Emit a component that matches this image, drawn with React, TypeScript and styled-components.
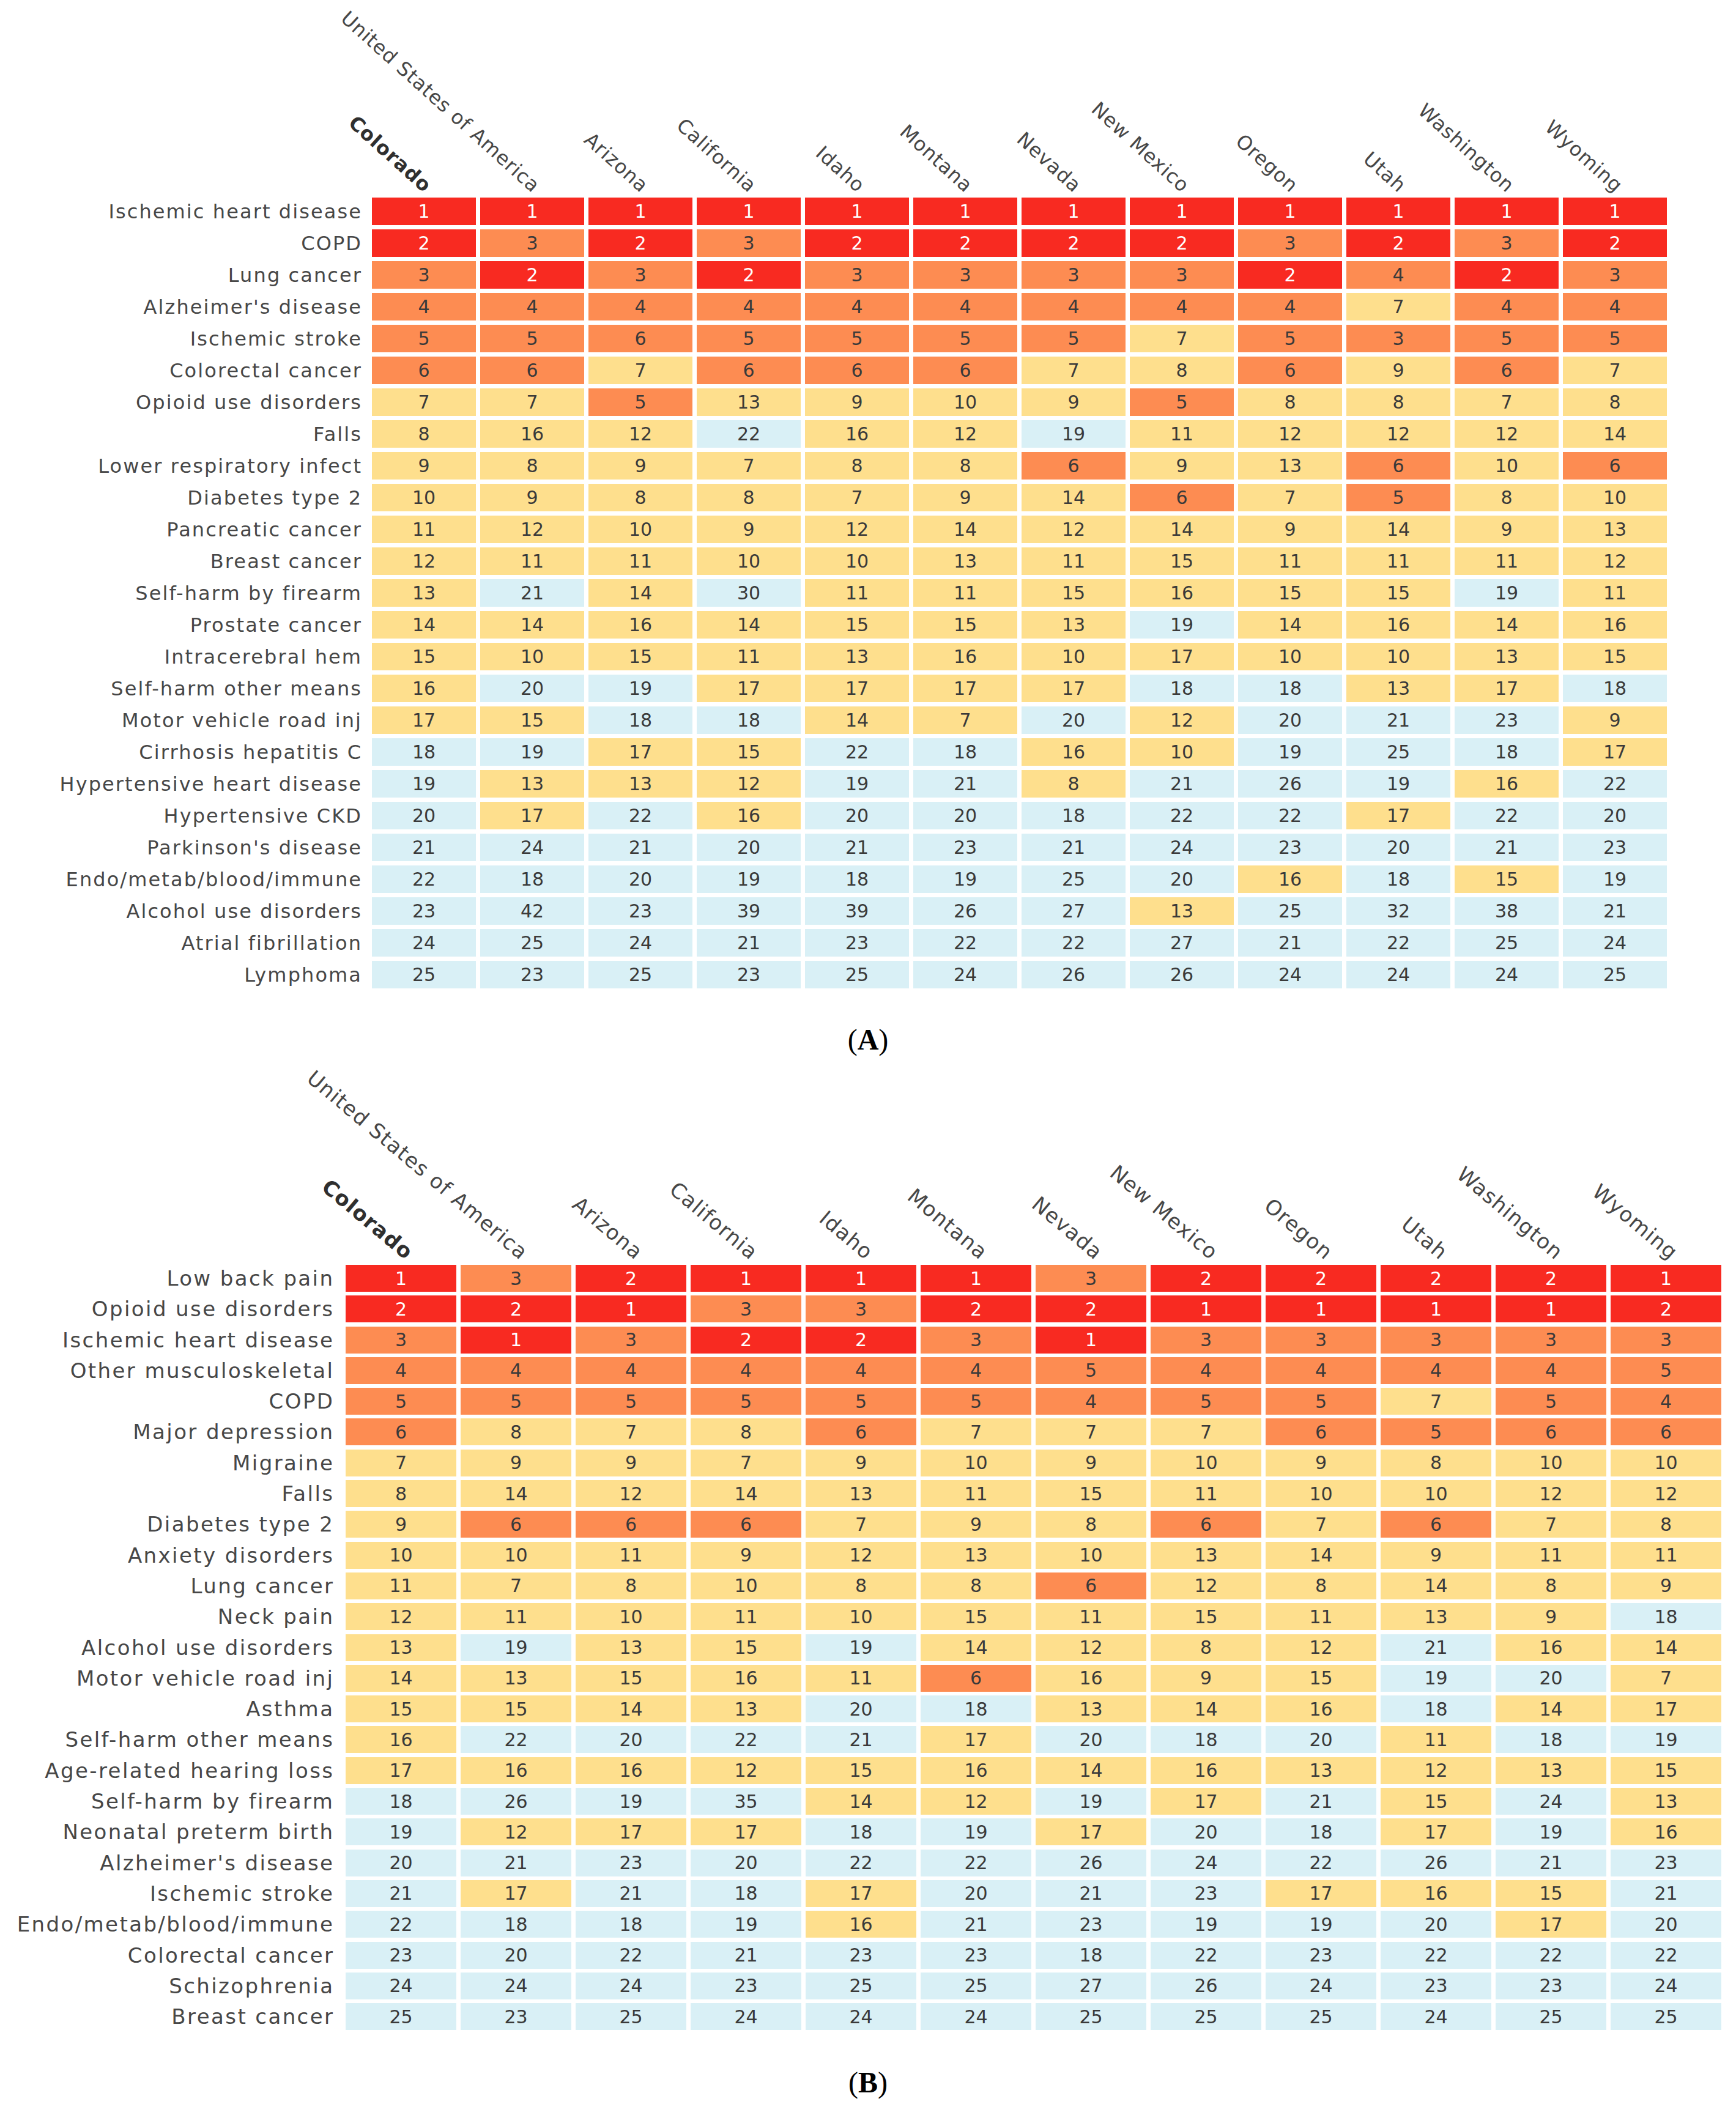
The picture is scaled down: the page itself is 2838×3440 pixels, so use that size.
import React from 'react';
import styled, {createGlobalStyle} from 'styled-components';

type Tier = 'red' | 'orange' | 'yellow' | 'blue';

interface PanelSpec {
    caption: string;
    headerHeight: number;
    labelWidth: number;
    labelPad: number;
    labelSize: number;
    colWidth: number;
    rowHeight: number;
    rowGap: number;
    angle: number;
    letterSpacing: number;
    headSpacing: number;
    headShift: number;
    captionGap: number;
    rows: [string, number[]][];
}

const COLUMNS = [
    'Colorado', 'United States of America', 'Arizona', 'California', 'Idaho', 'Montana',
    'Nevada', 'New Mexico', 'Oregon', 'Utah', 'Washington', 'Wyoming',
];

const PANELS: PanelSpec[] = [
    {
        caption: 'A',
        headerHeight: 323,
        labelWidth: 601,
        labelPad: 11,
        labelSize: 32,
        colWidth: 170,
        rowHeight: 45,
        rowGap: 7,
        angle: 42,
        letterSpacing: 2.1,
        headSpacing: 1,
        headShift: -3,
        captionGap: 60,
        rows: [
            ['Ischemic heart disease', [1, 1, 1, 1, 1, 1, 1, 1, 1, 1, 1, 1]],
            ['COPD', [2, 3, 2, 3, 2, 2, 2, 2, 3, 2, 3, 2]],
            ['Lung cancer', [3, 2, 3, 2, 3, 3, 3, 3, 2, 4, 2, 3]],
            ["Alzheimer's disease", [4, 4, 4, 4, 4, 4, 4, 4, 4, 7, 4, 4]],
            ['Ischemic stroke', [5, 5, 6, 5, 5, 5, 5, 7, 5, 3, 5, 5]],
            ['Colorectal cancer', [6, 6, 7, 6, 6, 6, 7, 8, 6, 9, 6, 7]],
            ['Opioid use disorders', [7, 7, 5, 13, 9, 10, 9, 5, 8, 8, 7, 8]],
            ['Falls', [8, 16, 12, 22, 16, 12, 19, 11, 12, 12, 12, 14]],
            ['Lower respiratory infect', [9, 8, 9, 7, 8, 8, 6, 9, 13, 6, 10, 6]],
            ['Diabetes type 2', [10, 9, 8, 8, 7, 9, 14, 6, 7, 5, 8, 10]],
            ['Pancreatic cancer', [11, 12, 10, 9, 12, 14, 12, 14, 9, 14, 9, 13]],
            ['Breast cancer', [12, 11, 11, 10, 10, 13, 11, 15, 11, 11, 11, 12]],
            ['Self-harm by firearm', [13, 21, 14, 30, 11, 11, 15, 16, 15, 15, 19, 11]],
            ['Prostate cancer', [14, 14, 16, 14, 15, 15, 13, 19, 14, 16, 14, 16]],
            ['Intracerebral hem', [15, 10, 15, 11, 13, 16, 10, 17, 10, 10, 13, 15]],
            ['Self-harm other means', [16, 20, 19, 17, 17, 17, 17, 18, 18, 13, 17, 18]],
            ['Motor vehicle road inj', [17, 15, 18, 18, 14, 7, 20, 12, 20, 21, 23, 9]],
            ['Cirrhosis hepatitis C', [18, 19, 17, 15, 22, 18, 16, 10, 19, 25, 18, 17]],
            ['Hypertensive heart disease', [19, 13, 13, 12, 19, 21, 8, 21, 26, 19, 16, 22]],
            ['Hypertensive CKD', [20, 17, 22, 16, 20, 20, 18, 22, 22, 17, 22, 20]],
            ["Parkinson's disease", [21, 24, 21, 20, 21, 23, 21, 24, 23, 20, 21, 23]],
            ['Endo/metab/blood/immune', [22, 18, 20, 19, 18, 19, 25, 20, 16, 18, 15, 19]],
            ['Alcohol use disorders', [23, 42, 23, 39, 39, 26, 27, 13, 25, 32, 38, 21]],
            ['Atrial fibrillation', [24, 25, 24, 21, 23, 22, 22, 27, 21, 22, 25, 24]],
            ['Lymphoma', [25, 23, 25, 23, 25, 24, 26, 26, 24, 24, 24, 25]],
        ],
    },
    {
        caption: 'B',
        headerHeight: 344,
        labelWidth: 558,
        labelPad: 14,
        labelSize: 34,
        colWidth: 181,
        rowHeight: 44,
        rowGap: 6.3,
        angle: 40,
        letterSpacing: 2.4,
        headSpacing: 1.4,
        headShift: 4,
        captionGap: 62,
        rows: [
            ['Low back pain', [1, 3, 2, 1, 1, 1, 3, 2, 2, 2, 2, 1]],
            ['Opioid use disorders', [2, 2, 1, 3, 3, 2, 2, 1, 1, 1, 1, 2]],
            ['Ischemic heart disease', [3, 1, 3, 2, 2, 3, 1, 3, 3, 3, 3, 3]],
            ['Other musculoskeletal', [4, 4, 4, 4, 4, 4, 5, 4, 4, 4, 4, 5]],
            ['COPD', [5, 5, 5, 5, 5, 5, 4, 5, 5, 7, 5, 4]],
            ['Major depression', [6, 8, 7, 8, 6, 7, 7, 7, 6, 5, 6, 6]],
            ['Migraine', [7, 9, 9, 7, 9, 10, 9, 10, 9, 8, 10, 10]],
            ['Falls', [8, 14, 12, 14, 13, 11, 15, 11, 10, 10, 12, 12]],
            ['Diabetes type 2', [9, 6, 6, 6, 7, 9, 8, 6, 7, 6, 7, 8]],
            ['Anxiety disorders', [10, 10, 11, 9, 12, 13, 10, 13, 14, 9, 11, 11]],
            ['Lung cancer', [11, 7, 8, 10, 8, 8, 6, 12, 8, 14, 8, 9]],
            ['Neck pain', [12, 11, 10, 11, 10, 15, 11, 15, 11, 13, 9, 18]],
            ['Alcohol use disorders', [13, 19, 13, 15, 19, 14, 12, 8, 12, 21, 16, 14]],
            ['Motor vehicle road inj', [14, 13, 15, 16, 11, 6, 16, 9, 15, 19, 20, 7]],
            ['Asthma', [15, 15, 14, 13, 20, 18, 13, 14, 16, 18, 14, 17]],
            ['Self-harm other means', [16, 22, 20, 22, 21, 17, 20, 18, 20, 11, 18, 19]],
            ['Age-related hearing loss', [17, 16, 16, 12, 15, 16, 14, 16, 13, 12, 13, 15]],
            ['Self-harm by firearm', [18, 26, 19, 35, 14, 12, 19, 17, 21, 15, 24, 13]],
            ['Neonatal preterm birth', [19, 12, 17, 17, 18, 19, 17, 20, 18, 17, 19, 16]],
            ["Alzheimer's disease", [20, 21, 23, 20, 22, 22, 26, 24, 22, 26, 21, 23]],
            ['Ischemic stroke', [21, 17, 21, 18, 17, 20, 21, 23, 17, 16, 15, 21]],
            ['Endo/metab/blood/immune', [22, 18, 18, 19, 16, 21, 23, 19, 19, 20, 17, 20]],
            ['Colorectal cancer', [23, 20, 22, 21, 23, 23, 18, 22, 23, 22, 22, 22]],
            ['Schizophrenia', [24, 24, 24, 23, 25, 25, 27, 26, 24, 23, 23, 24]],
            ['Breast cancer', [25, 23, 25, 24, 24, 24, 25, 25, 25, 24, 25, 25]],
        ],
    },
];

const tierOf = (rank: number): Tier => {
    if (rank <= 2) return 'red';
    if (rank <= 6) return 'orange';
    if (rank <= 17) return 'yellow';
    return 'blue';
};

const TIER_BG: Record<Tier, string> = {
    red: '#f82a21',
    orange: '#fd8c52',
    yellow: '#fedf8d',
    blue: '#d9f0f6',
};

export default function App() {
    return (
        <>
            <GlobalStyle/>
            <Page>
                {PANELS.map(panel => {
                    const template = `${panel.labelWidth}px repeat(${COLUMNS.length}, ${panel.colWidth}px)`;
                    return (
                        <Panel key={panel.caption}>
                            <HeaderBand $template={template} $height={panel.headerHeight}>
                                <span/>
                                {COLUMNS.map((col, i) => (
                                    <HeaderCell key={col}>
                                        <HeaderText
                                            $angle={panel.angle}
                                            $spacing={panel.headSpacing}
                                            $shift={panel.headShift}
                                            $size={panel.labelSize}
                                            $bold={i === 0}
                                        >
                                            {col}
                                        </HeaderText>
                                    </HeaderCell>
                                ))}
                            </HeaderBand>
                            <Grid $template={template} $rowHeight={panel.rowHeight} $rowGap={panel.rowGap}>
                                {panel.rows.map(([label, values]) => (
                                    <React.Fragment key={label}>
                                        <RowLabel $pad={panel.labelPad} $spacing={panel.letterSpacing} $size={panel.labelSize}>
                                            {label}
                                        </RowLabel>
                                        {values.map((v, i) => (
                                            <Cell key={i} $tier={tierOf(v)}>{v}</Cell>
                                        ))}
                                    </React.Fragment>
                                ))}
                            </Grid>
                            <Caption $gap={panel.captionGap}>
                                (<b>{panel.caption}</b>)
                            </Caption>
                        </Panel>
                    );
                })}
            </Page>
        </>
    );
}

const GlobalStyle = createGlobalStyle`
  html, body {
    margin: 0;
    padding: 0;
    background: #ffffff;
  }
`

const Page = styled.div`
  width: 2838px;
  min-height: 3440px;
  background: #ffffff;
  font-family: "DejaVu Sans", Verdana, sans-serif;
  color: #454545;
`
const Panel = styled.section`
  display: flex;
  flex-direction: column;
`
const HeaderBand = styled.div<{ $template: string; $height: number }>`
  display: grid;
  grid-template-columns: ${p => p.$template};
  column-gap: 7px;
  height: ${p => p.$height}px;
`
const HeaderCell = styled.div`
  position: relative;
  height: 100%;
`
const HeaderText = styled.span<{ $angle: number; $spacing: number; $shift: number; $size: number; $bold: boolean }>`
  position: absolute;
  right: calc(50% - ${p => p.$shift}px);
  bottom: 3px;
  transform-origin: 100% 100%;
  transform: rotate(${p => p.$angle}deg);
  white-space: nowrap;
  line-height: 1;
  font-size: ${p => p.$size}px;
  letter-spacing: ${p => p.$spacing}px;
  font-weight: ${p => (p.$bold ? 700 : 400)};
  color: ${p => (p.$bold ? '#2f2f2f' : '#474747')};
`
const Grid = styled.div<{ $template: string; $rowHeight: number; $rowGap: number }>`
  display: grid;
  grid-template-columns: ${p => p.$template};
  grid-auto-rows: ${p => p.$rowHeight}px;
  column-gap: 7px;
  row-gap: ${p => p.$rowGap}px;
`
const RowLabel = styled.div<{ $pad: number; $spacing: number; $size: number }>`
  display: flex;
  align-items: center;
  justify-content: flex-end;
  padding-right: ${p => p.$pad}px;
  margin-right: -${p => p.$spacing}px;
  white-space: nowrap;
  font-size: ${p => p.$size}px;
  letter-spacing: ${p => p.$spacing}px;
  color: #474747;
`
const Cell = styled.div<{ $tier: Tier }>`
  display: flex;
  align-items: center;
  justify-content: center;
  background: ${p => TIER_BG[p.$tier]};
  color: ${p => (p.$tier === 'red' ? '#ffffff' : '#3a3a3a')};
  font-size: 30px;
`
const Caption = styled.div<{ $gap: number }>`
  margin-top: ${p => p.$gap}px;
  text-align: center;
  font-family: "Liberation Serif", "Times New Roman", serif;
  font-size: 48px;
  line-height: 48px;
  color: #000000;
  b {
    font-weight: 700;
  }
`
